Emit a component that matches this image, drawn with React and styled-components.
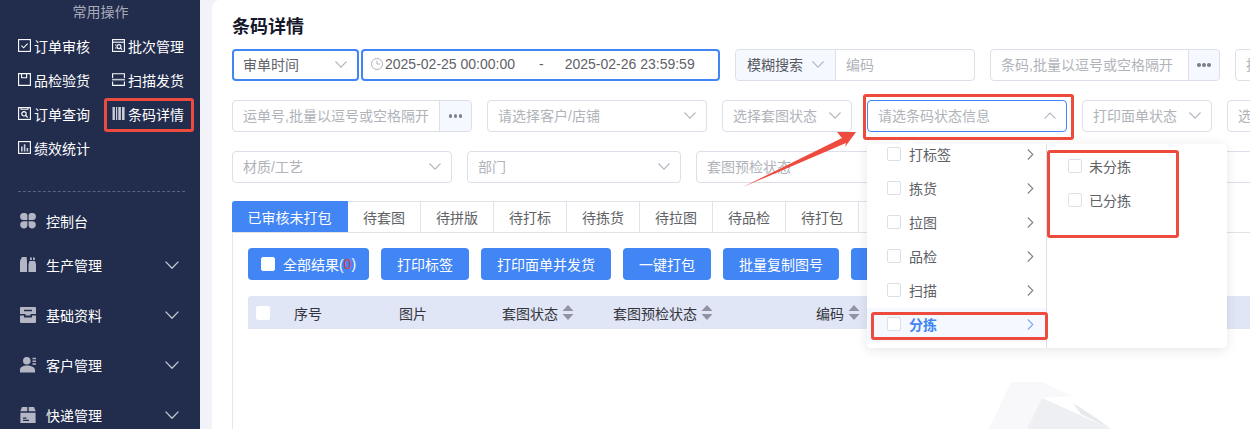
import styled, { createGlobalStyle } from "styled-components";

const GlobalStyle = createGlobalStyle`
  html, body {
    margin: 0;
    padding: 0;
    height: 100%;
    overflow: hidden;
    background: #f2f3f8;
    font-family: "Liberation Sans", "Noto Sans CJK SC", sans-serif;
  }
  * { box-sizing: border-box; }
`;

const blue = "#4285f4";
const red = "#ee4b3f";
const line = "#dcdfe8";

const Page = styled.div`
  display: flex;
  width: 1250px;
  height: 429px;
  overflow: hidden;
  background: #f2f3f8;
`;

/* sidebar */
const Side = styled.aside`
  flex: 0 0 200px;
  background: #222c4d;
  color: #fff;
`;
const SideTitle = styled.div`
  height: 30px;
  padding: 3px 0 0 1px;
  text-align: center;
  font-size: 14px;
  line-height: 18px;
  color: #a7abba;
`;
const Shortcuts = styled.div`
  display: grid;
  grid-template-columns: 94px 88px;
  grid-auto-rows: 34px;
  padding-left: 18px;
`;
const Shortcut = styled.div`
  position: relative;
  display: flex;
  align-items: center;
  gap: 3px;
  padding-bottom: 3px;
  font-size: 14px;
  white-space: nowrap;
  svg { flex: 0 0 13px; }
`;
const Divider = styled.div`
  margin: 25px 15px 9px 18px;
  border-top: 1px dashed #5a627c;
`;
const MenuItem = styled.div`
  display: flex;
  align-items: center;
  height: ${(p) => p.$height || 50}px;
  padding-left: 20px;
  font-size: 14px;
  svg.lead { flex: 0 0 16px; margin-right: 10px; }
  svg.arrow { margin-left: auto; margin-right: 21px; }
`;

/* main */
const Main = styled.main`
  flex: 1;
  min-width: 0;
  margin-left: 12px;
  padding: 15px 0 0 20px;
  background: #fff;
  border-top-left-radius: 8px;
  overflow: hidden;
`;
const Title = styled.h1`
  margin: 0 0 10px;
  font-size: 18px;
  line-height: 24px;
  font-weight: 700;
  color: #15172b;
`;
const FilterRow = styled.div`
  display: flex;
  gap: 15px;
  height: 32px;
  margin-bottom: 19px;
  white-space: nowrap;
`;
const Pair = styled.div`
  display: flex;
  gap: 2px;
`;
const Field = styled.div`
  position: relative;
  flex: 0 0 ${(p) => p.$w}px;
  display: flex;
  align-items: center;
  height: 32px;
  padding: ${(p) => (p.$active ? "0 10px 2px 9px" : "0 10px 2px")};
  background: #fff;
  border: ${(p) => (p.$active ? `2px solid ${blue}` : p.$focus ? `1px solid ${blue}` : `1px solid ${line}`)};
  border-radius: 4px;
  font-size: 14px;
  color: ${(p) => (p.$value ? "#5f6268" : "#b0b3ba")};
  svg.caret { margin-left: auto; margin-top: 2px; flex: none; }
`;
const Addon = styled.div`
  flex: none;
  display: flex;
  align-items: center;
  justify-content: center;
  align-self: stretch;
  width: ${(p) => p.$w}px;
  margin: ${(p) => (p.$left ? "0 10px -2px -10px" : "0 -10px -2px auto")};
  padding-bottom: 2px;
  background: #f5f8fe;
  border-${(p) => (p.$left ? "right" : "left")}: 1px solid ${line};
  border-radius: ${(p) => (p.$left ? "4px 0 0 4px" : "0 4px 4px 0")};
  color: #55585f;
  font-size: 14px;
  gap: 9px;
  svg.caret { margin-left: 0; }
`;
const Dots = styled.span`
  width: 3.5px;
  height: 3.5px;
  margin-top: 2px;
  border-radius: 50%;
  background: #7f838d;
  box-shadow: 5px 0 #7f838d, -5px 0 #7f838d;
`;
const DateText = styled.span`
  margin-left: ${(p) => p.$gap || 0}px;
  font-size: 14px;
`;
const ClockIcon = styled.svg`
  flex: none;
  margin-left: -1px;
`;

const Mark = styled.span`
  position: absolute;
  top: ${(p) => p.$t}px;
  left: ${(p) => p.$l}px;
  width: ${(p) => p.$w}px;
  height: ${(p) => p.$h}px;
  border: 3px solid ${red};
  border-radius: 3px;
  pointer-events: none;
  z-index: 5;
`;
const Arrow = styled.svg`
  position: absolute;
  left: -128px;
  top: 27px;
  z-index: 6;
`;

/* cascader popup */
const Popup = styled.div`
  position: absolute;
  top: 43px;
  left: -1px;
  z-index: 4;
  display: flex;
  width: 360px;
  height: 204px;
  background: #fff;
  border-radius: 4px;
  box-shadow: 0 2px 12px rgba(0, 0, 0, 0.1);
  color: #606266;
  &::before {
    content: "";
    position: absolute;
    top: -5px;
    left: 35px;
    width: 10px;
    height: 10px;
    background: #fff;
    transform: rotate(45deg);
  }
`;
const PopupColumn = styled.div`
  position: relative;
  flex: 0 0 ${(p) => p.$w}px;
  height: 100%;
  padding-top: ${(p) => p.$pad || 0}px;
  border-right: ${(p) => (p.$divided ? `1px solid ${line}` : "none")};
`;
const PopupClip = styled.div`
  height: 100%;
  overflow: hidden;
  & > div:first-child { margin-top: -6px; }
`;
const Option = styled.div`
  position: relative;
  display: flex;
  align-items: center;
  height: 34px;
  padding: 0 12px 2px ${(p) => p.$indent || 20}px;
  font-size: 14px;
  font-weight: ${(p) => (p.$on ? 700 : 400)};
  color: ${(p) => (p.$on ? blue : "#606266")};
  background: ${(p) => (p.$on ? "#f5f8ff" : "transparent")};
  svg { margin-left: auto; }
`;
const Box = styled.span`
  flex: none;
  width: 14px;
  height: 14px;
  margin-right: ${(p) => p.$gap || 8}px;
  background: #fff;
  border: 1px solid ${(p) => (p.$plain ? "#fff" : "#dcdfe6")};
  border-radius: 2px;
`;

/* tabs, panel */
const Tabs = styled.div`
  display: flex;
  height: 32px;
  margin-top: -1px;
  border-bottom: 1px solid #e2e3e8;
  font-size: 14px;
`;
const Tab = styled.div`
  flex: 0 0 ${(p) => (p.$on ? 116 : 73)}px;
  display: flex;
  align-items: center;
  justify-content: center;
  color: ${(p) => (p.$on ? "#fff" : "#606266")};
  background: ${(p) => (p.$on ? blue : "#fff")};
  border-top: 1px solid ${(p) => (p.$on ? blue : "#e2e3e8")};
  border-right: 1px solid ${(p) => (p.$on ? blue : "#e2e3e8")};
  border-top-left-radius: ${(p) => (p.$on ? 3 : 0)}px;
`;
const Panel = styled.div`
  padding: 15px 0 0 15px;
  border-left: 1px solid #e6e7eb;
  height: 200px;
`;
const Toolbar = styled.div`
  display: flex;
  gap: 12px;
  margin-bottom: 16px;
`;
const Button = styled.div`
  flex: 0 0 ${(p) => p.$w}px;
  display: flex;
  align-items: center;
  justify-content: center;
  height: 32px;
  background: ${blue};
  color: #fff;
  border-radius: 4px;
  font-size: 14px;
  white-space: nowrap;
  b { font-weight: 400; color: #e8373f; }
`;
const TableHead = styled.div`
  display: grid;
  grid-template-columns: 38px 105px 103px 111px 203px 200px;
  align-items: center;
  width: 1300px;
  height: 33px;
  padding-left: 8px;
  background: #e1e6f6;
  border-radius: 3px 3px 0 0;
  font-size: 14px;
  color: #33353c;
  white-space: nowrap;
`;
const HeadCell = styled.div`
  display: flex;
  align-items: center;
  gap: 4px;
`;
const EmptyArt = styled.svg`
  display: block;
  margin: 53px 0 0 741px;
`;

/* icons */
const S = { fill: "none", stroke: "#fff", strokeWidth: 1.1 };

const Ico = ({ children }) => <svg width="13" height="13" viewBox="0 0 13 13">{children}</svg>;

const shortcutIcons = {
  check: (
    <Ico>
      <rect x=".6" y=".6" width="11.8" height="11.8" {...S} />
      <path d="M3.4 6.6l2.2 2.2 4-4.2" {...S} />
    </Ico>
  ),
  batch: (
    <Ico>
      <rect x=".6" y=".6" width="11.8" height="11.8" {...S} />
      <path d="M.6 3.2h11.8" {...S} />
      <circle cx="7" cy="7.6" r="2" {...S} />
      <path d="M8.6 9.2l1.4 1.4M3 6h1.5M3 9h1.5" {...S} />
    </Ico>
  ),
  box: (
    <Ico>
      <path d="M.6.6h11.8v11.8H.6z" {...S} />
      <path d="M3.6.6v4.2h5V.6" {...S} />
    </Ico>
  ),
  scan: (
    <Ico>
      <path d="M.6 5V.8h11.8V5M.6 8.4v4h11.8v-4" {...S} />
      <path d="M0 6.6h13" fill="none" stroke="#c8cbd6" strokeWidth="1.6" />
    </Ico>
  ),
  search: (
    <Ico>
      <rect x=".6" y=".6" width="11.8" height="11.8" {...S} />
      <path d="M3 .6v1.6h7V.6" {...S} />
      <circle cx="6" cy="6.8" r="2.2" {...S} />
      <path d="M7.7 8.5l2 2" {...S} />
    </Ico>
  ),
  bars: (
    <Ico>
      <path d="M.5 0h2.400v13H.5zM4 0h1.200v13H4zM6.300 0h2.600v13H6.300zM10 0h2.600v13H10z" fill="#c9ccd6" />
    </Ico>
  ),
  chart: (
    <Ico>
      <rect x=".6" y=".6" width="11.8" height="11.8" {...S} />
      <path d="M3 5.5h1.6v5H3zM5.8 3.2h1.6v7.3H5.8zM8.6 7h1.6v3.5H8.6z" fill="#c9ccd6" />
    </Ico>
  ),
};

const menuFill = "#b4b7c3";
const Lead = ({ children }) => (
  <svg className="lead" width="16" height="16" viewBox="0 0 16 16" fill={menuFill}>
    {children}
  </svg>
);
const menuIcons = {
  board: (
    <Lead>
      <path d="M3.6 0h1.6a3 3 0 0 1 2.2 3.4V7H3.6A3.5 3.5 0 0 1 3.6 0zM10.8 0h1.6a3.5 3.5 0 0 1 0 7H8.600V3.400A3 3 0 0 1 10.800 0zM3.600 8.200h3.800v4A3.600 3.600 0 1 1 3.600 8.200zM8.600 8.200h3.800a3.600 3.600 0 1 1-3.800 4z" />
    </Lead>
  ),
  books: (
    <Lead>
      <path d="M2 0h4.500L7 4v11H0V4zM9.500 4h5.500l1 3v8H8.500V7zM10 .5h1.800V3H10zM13 .5h1.800V3H13z" />
    </Lead>
  ),
  tray: (
    <Lead>
      <path d="M1 0h14a1 1 0 0 1 1 1v6h-5.500v1.500h-5V7H0V1a1 1 0 0 1 1-1zm3 2.800v1.400h8V2.800zM0 8.500h4V10.500h8V8.500h4V15a1 1 0 0 1-1 1H1a1 1 0 0 1-1-1z" />
    </Lead>
  ),
  person: (
    <Lead>
      <circle cx="6.800" cy="3.800" r="3.800" />
      <path d="M0 15.500v-2.300C0 10 3 8.500 7 8.500s8 1.500 8 4.700v2.300zM12.500.8h3.500v1.500h-3.500zM12.500 3.500h3.500V5h-3.500zM12.500 6.200h3.500v1.500h-3.500z" />
    </Lead>
  ),
  parcel: (
    <Lead>
      <path d="M2 0h5.300v4.300H.3zM8.700 0H14l1.700 4.300H8.700zM.4 5.700h15.200V16H.4zM3 10.500v1.200h3.500v-1.200zM3 12.800V14h6v-1.200z" />
    </Lead>
  ),
};

const Chevron = ({ up, color = "#b4b7bf", size = 12, className = "caret" }) => (
  <svg className={className} width={size} height={size * 0.6} viewBox="0 0 12 7.200" fill="none" stroke={color} strokeWidth="1.100">
    <path d={up ? "M.5 6.700L6 1l5.500 5.700" : "M.5.500L6 6.200 11.500.500"} />
  </svg>
);

const Right = ({ color = "#7d8087" }) => (
  <svg width="7" height="11" viewBox="0 0 7 11" fill="none" stroke={color} strokeWidth="1.100">
    <path d="M.8.500l5 5-5 5" />
  </svg>
);

const Sort = () => (
  <svg width="12" height="15" viewBox="0 0 12 15" fill="#8f93a3">
    <path d="M6 0l5.500 6H.5zM6 15L.5 9h11z" />
  </svg>
);

const Clock = () => (
  <ClockIcon width="12" height="12" viewBox="0 0 12 12" fill="none" stroke="#a8abb3" strokeWidth=".9">
    <circle cx="6" cy="6" r="5.500" />
    <path d="M6 2.600V6h3" />
  </ClockIcon>
);

const shortcuts = [
  ["check", "订单审核"],
  ["batch", "批次管理"],
  ["box", "品检验货"],
  ["scan", "扫描发货"],
  ["search", "订单查询"],
  ["bars", "条码详情", true],
  ["chart", "绩效统计"],
];
const menu = [
  ["books", "生产管理"],
  ["tray", "基础资料"],
  ["person", "客户管理"],
  ["parcel", "快递管理"],
];
const tabs = ["待套图", "待拼版", "待打标", "待拣货", "待拉图", "待品检", "待打包", ""];
const cascade = ["打标签", "拣货", "拉图", "品检", "扫描"];

export default function App() {
  return (
    <Page>
      <GlobalStyle />
      <Side>
        <SideTitle>常用操作</SideTitle>
        <Shortcuts>
          {shortcuts.map(([icon, label, marked]) => (
            <Shortcut key={label}>
              {shortcutIcons[icon]}
              {label}
              {marked && <Mark $t={0} $l={-8} $w={90} $h={34} />}
            </Shortcut>
          ))}
        </Shortcuts>
        <Divider />
        <MenuItem $height={39}>{menuIcons.board}控制台</MenuItem>
        {menu.map(([icon, label]) => (
          <MenuItem key={label} $height={50}>
            {menuIcons[icon]}
            {label}
            <Chevron className="arrow" color="#c9ccd6" size={14} />
          </MenuItem>
        ))}
      </Side>

      <Main>
        <Title>条码详情</Title>

        <FilterRow>
          <Pair>
            <Field $w={127} $active $value>
              审单时间
              <Chevron />
            </Field>
            <Field $w={359} $active $value>
              <Clock />
              <DateText $gap={2}>2025-02-25 00:00:00</DateText>
              <DateText $gap={24}>-</DateText>
              <DateText $gap={21}>2025-02-26 23:59:59</DateText>
            </Field>
          </Pair>
          <Field $w={240}>
            <Addon $w={100} $left>
              模糊搜索
              <Chevron />
            </Addon>
            编码
          </Field>
          <Field $w={230}>
            条码,批量以逗号或空格隔开
            <Addon $w={31}>
              <Dots />
            </Addon>
          </Field>
          <Field $w={230}>批次号</Field>
        </FilterRow>

        <FilterRow>
          <Field $w={240}>
            运单号,批量以逗号或空格隔开
            <Addon $w={32}>
              <Dots />
            </Addon>
          </Field>
          <Field $w={220}>
            请选择客户/店铺
            <Chevron />
          </Field>
          <Field $w={130}>
            选择套图状态
            <Chevron />
          </Field>
          <Field $w={200} $focus>
            请选条码状态信息
            <Chevron up />
            <Mark $t={-7} $l={-5} $w={211} $h={46} />
            <Arrow width="120" height="62" viewBox="0 0 120 62">
              <path d="M116 4H97l5 6L3 59l103-44-1 4z" fill={red} />
            </Arrow>
            <Popup>
              <PopupColumn $w={180} $divided>
                <PopupClip>
                  {cascade.map((name) => (
                    <Option key={name}>
                      <Box />
                      {name}
                      <Right />
                    </Option>
                  ))}
                  <Option $on>
                    <Box />
                    分拣
                    <Right color="#7fa8f6" />
                  </Option>
                </PopupClip>
                <Mark $t={168} $l={4} $w={177} $h={28} />
              </PopupColumn>
              <PopupColumn $w={180} $pad={6}>
                <Option $indent={21}>
                  <Box $gap={7} />
                  未分拣
                </Option>
                <Option $indent={21}>
                  <Box $gap={7} />
                  已分拣
                </Option>
                <Mark $t={6} $l={0} $w={132} $h={88} />
              </PopupColumn>
            </Popup>
          </Field>
          <Field $w={130}>
            打印面单状态
            <Chevron />
          </Field>
          <Field $w={130}>选择状态</Field>
        </FilterRow>

        <FilterRow>
          <Field $w={220}>
            材质/工艺
            <Chevron />
          </Field>
          <Field $w={214}>
            部门
            <Chevron />
          </Field>
          <Field $w={700}>套图预检状态</Field>
        </FilterRow>

        <Tabs>
          <Tab $on>已审核未打包</Tab>
          {tabs.map((t, i) => (
            <Tab key={i}>{t}</Tab>
          ))}
        </Tabs>

        <Panel>
          <Toolbar>
            <Button $w={121}>
              <Box $plain $gap={8} />
              全部结果(<b>0</b>)
            </Button>
            <Button $w={88}>打印标签</Button>
            <Button $w={130}>打印面单并发货</Button>
            <Button $w={88}>一键打包</Button>
            <Button $w={116}>批量复制图号</Button>
            <Button $w={100} />
          </Toolbar>

          <TableHead>
            <Box $plain />
            <div>序号</div>
            <div>图片</div>
            <HeadCell>
              套图状态
              <Sort />
            </HeadCell>
            <HeadCell>
              套图预检状态
              <Sort />
            </HeadCell>
            <HeadCell>
              编码
              <Sort />
            </HeadCell>
          </TableHead>

          <EmptyArt width="130" height="47" viewBox="0 0 130 47">
            <path d="M22 0h31l30 14-30 2-15 31H0z" fill="#f8f8fa" />
            <path d="M53 16l69 31H38z" fill="#eeeff2" />
            <path d="M84 21l23 15 15 11-30-15z" fill="#e8e9ec" />
          </EmptyArt>
        </Panel>
      </Main>
    </Page>
  );
}
